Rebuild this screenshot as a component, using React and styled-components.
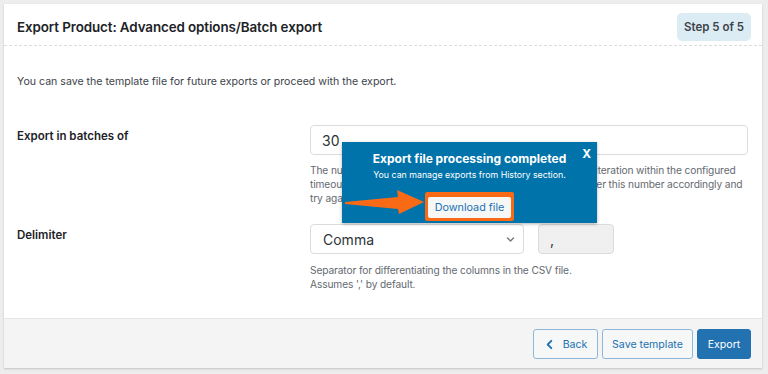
import React from "react";
import styled, { createGlobalStyle } from "styled-components";

const GlobalStyle = createGlobalStyle`
  html, body { margin: 0; padding: 0; }
  body {
    background: #ededed;
    font-family: Inter, "Noto Sans", "Liberation Sans", sans-serif;
    color: #3c434a;
  }
  * { box-sizing: border-box; }
`;

const Page = styled.div`
  padding: 4px 6px 6px 4px;
`;

const Card = styled.div`
  position: relative;
  background: #fff;
  box-shadow: 0 1px 2px rgba(0, 0, 0, 0.18);
  height: 364px;
  display: flex;
  flex-direction: column;
`;

const Header = styled.div`
  display: flex;
  align-items: center;
  justify-content: space-between;
  height: 42px;
  padding: 5px 11px 0 13px;
  border-bottom: 1px dashed #dcdcde;
`;

const Title = styled.h2`
  margin: 0;
  font-size: 13.4px;
  font-weight: 600;
  color: #1d2327;
  letter-spacing: -0.1px;
`;

const StepBadge = styled.span`
  display: inline-flex;
  align-items: center;
  justify-content: center;
  width: 74px;
  height: 28px;
  border-radius: 5px;
  background: #dcecf4;
  color: #3c434a;
  font-size: 11.5px;
  font-weight: 600;
`;

const Body = styled.div`
  flex: 1;
  padding: 0 14px 0 13px;
`;

const Intro = styled.p`
  margin: 27px 0 34px;
  font-size: 10.6px;
  line-height: 18px;
  color: #3c434a;
`;

const FieldRow = styled.div`
  display: grid;
  grid-template-columns: 293px 1fr;
  margin-bottom: ${(p) => p.$gap || 0}px;
`;

const Label = styled.label`
  padding-top: ${(p) => p.$top || 4}px;
  font-size: 11.5px;
  font-weight: 600;
  color: #1d2327;
  line-height: 16px;
`;

const Field = styled.div`
  display: flex;
  flex-direction: column;
`;

const Controls = styled.div`
  display: flex;
  gap: 14px;
`;

const TextInput = styled.div`
  height: 30px;
  width: ${(p) => p.$w || "100%"};
  border: 1px solid #dcdcde;
  border-radius: 4px;
  background: ${(p) => (p.$readonly ? "#f0f0f1" : "#fff")};
  display: flex;
  align-items: center;
  padding: 0 11px;
  font-size: 14px;
  color: #2c3338;
`;

const Select = styled.div`
  height: 30px;
  width: 214px;
  border: 1px solid #dcdcde;
  border-radius: 4px;
  background: #fff;
  display: flex;
  align-items: center;
  justify-content: space-between;
  padding: 0 8px 0 12px;
  font-size: 14px;
  color: #2c3338;
`;

const Help = styled.p`
  margin: ${(p) => p.$top || 8}px 0 0;
  font-size: 10.2px;
  line-height: 14px;
  letter-spacing: -0.12px;
  color: #646970;
  white-space: nowrap;
`;

const Footer = styled.div`
  height: 50px;
  background: #f4f4f4;
  border-top: 1px solid #e6e6e6;
  display: flex;
  justify-content: flex-end;
  align-items: flex-start;
  gap: 4px;
  padding: 10px 11px 0 0;
`;

const Button = styled.button`
  height: 30px;
  width: ${(p) => p.$w}px;
  padding: 0;
  border-radius: 3px;
  border: 1px solid ${(p) => (p.$primary ? "#2271b1" : "#8fb8dd")};
  background: ${(p) => (p.$primary ? "#2271b1" : "#f6f7f7")};
  color: ${(p) => (p.$primary ? "#fff" : "#2271b1")};
  font-family: inherit;
  font-size: 10.6px;
  display: inline-flex;
  align-items: center;
  justify-content: center;
  gap: 8px;
  cursor: pointer;
`;

const Popup = styled.div`
  position: absolute;
  left: 338px;
  top: 138px;
  width: 255px;
  height: 81px;
  background: #0073aa;
  box-shadow: 0 1px 3px rgba(0, 0, 0, 0.3);
  display: flex;
  flex-direction: column;
  align-items: center;
  padding-top: 9px;
  color: #fff;
`;

const PopupTitle = styled.div`
  font-size: 12px;
  font-weight: 700;
  line-height: 16px;
`;

const PopupText = styled.div`
  font-size: 8.8px;
  line-height: 12px;
  margin-top: 2px;
`;

const Close = styled.span`
  position: absolute;
  right: 6px;
  top: 4px;
  font-size: 12px;
  font-weight: 700;
`;

const Highlight = styled.div`
  margin-top: 11px;
  border: 3px solid #f96a16;
  border-radius: 2px;
  background: #f96a16;
`;

const DownloadButton = styled.button`
  height: 21px;
  width: 83px;
  border: none;
  border-radius: 2px;
  background: #f6f7f7;
  color: #2271b1;
  font-family: inherit;
  font-size: 10.8px;
  padding: 0;
  cursor: pointer;
`;

const ArrowSvg = styled.svg`
  position: absolute;
  left: 2px;
  top: 45px;
`;

function Chevron({ dir = "down", size = 10, color = "#50575e" }) {
  const d = dir === "down" ? "M2 4 L6 8 L10 4" : "M8 2 L4 6 L8 10";
  return (
    <svg width={size} height={size} viewBox="0 0 12 12" fill="none">
      <path d={d} stroke={color} strokeWidth="2" strokeLinecap="round" strokeLinejoin="round" />
    </svg>
  );
}

export default function App() {
  return (
    <>
      <GlobalStyle />
      <Page>
        <Card>
          <Header>
            <Title>Export Product: Advanced options/Batch export</Title>
            <StepBadge>Step 5 of 5</StepBadge>
          </Header>
          <Body>
            <Intro>You can save the template file for future exports or proceed with the export.</Intro>
            <FieldRow $gap={19}>
              <Label $top={3}>Export in batches of</Label>
              <Field>
                <TextInput>30</TextInput>
                <Help>
                  The number of records that the server will process for every iteration within the configured
                  <br />
                  timeout interval. If the export fails due to timeout you can lower this number accordingly and
                  <br />
                  try again
                </Help>
              </Field>
            </FieldRow>
            <FieldRow>
              <Label $top={3}>Delimiter</Label>
              <Field>
                <Controls>
                  <Select>
                    Comma
                    <Chevron size={9} color="#787c82" />
                  </Select>
                  <TextInput $w="76px" $readonly>,</TextInput>
                </Controls>
                <Help $top={9}>
                  Separator for differentiating the columns in the CSV file.
                  <br />
                  Assumes ',' by default.
                </Help>
              </Field>
            </FieldRow>
          </Body>
          <Footer>
            <Button $w={65}>
              <Chevron dir="left" size={11} color="#2271b1" />
              Back
            </Button>
            <Button $w={91}>Save template</Button>
            <Button $primary $w={54}>Export</Button>
          </Footer>
          <Popup>
            <Close>X</Close>
            <PopupTitle>Export file processing completed</PopupTitle>
            <PopupText>You can manage exports from History section.</PopupText>
            <Highlight>
              <DownloadButton>Download file</DownloadButton>
            </Highlight>
            <ArrowSvg width="82" height="30" viewBox="0 0 82 30">
              <polygon
                points="1,15 54,10 53,3 80,15 55,27 54,22 1,17"
                fill="#f96a16"
              />
            </ArrowSvg>
          </Popup>
        </Card>
      </Page>
    </>
  );
}
